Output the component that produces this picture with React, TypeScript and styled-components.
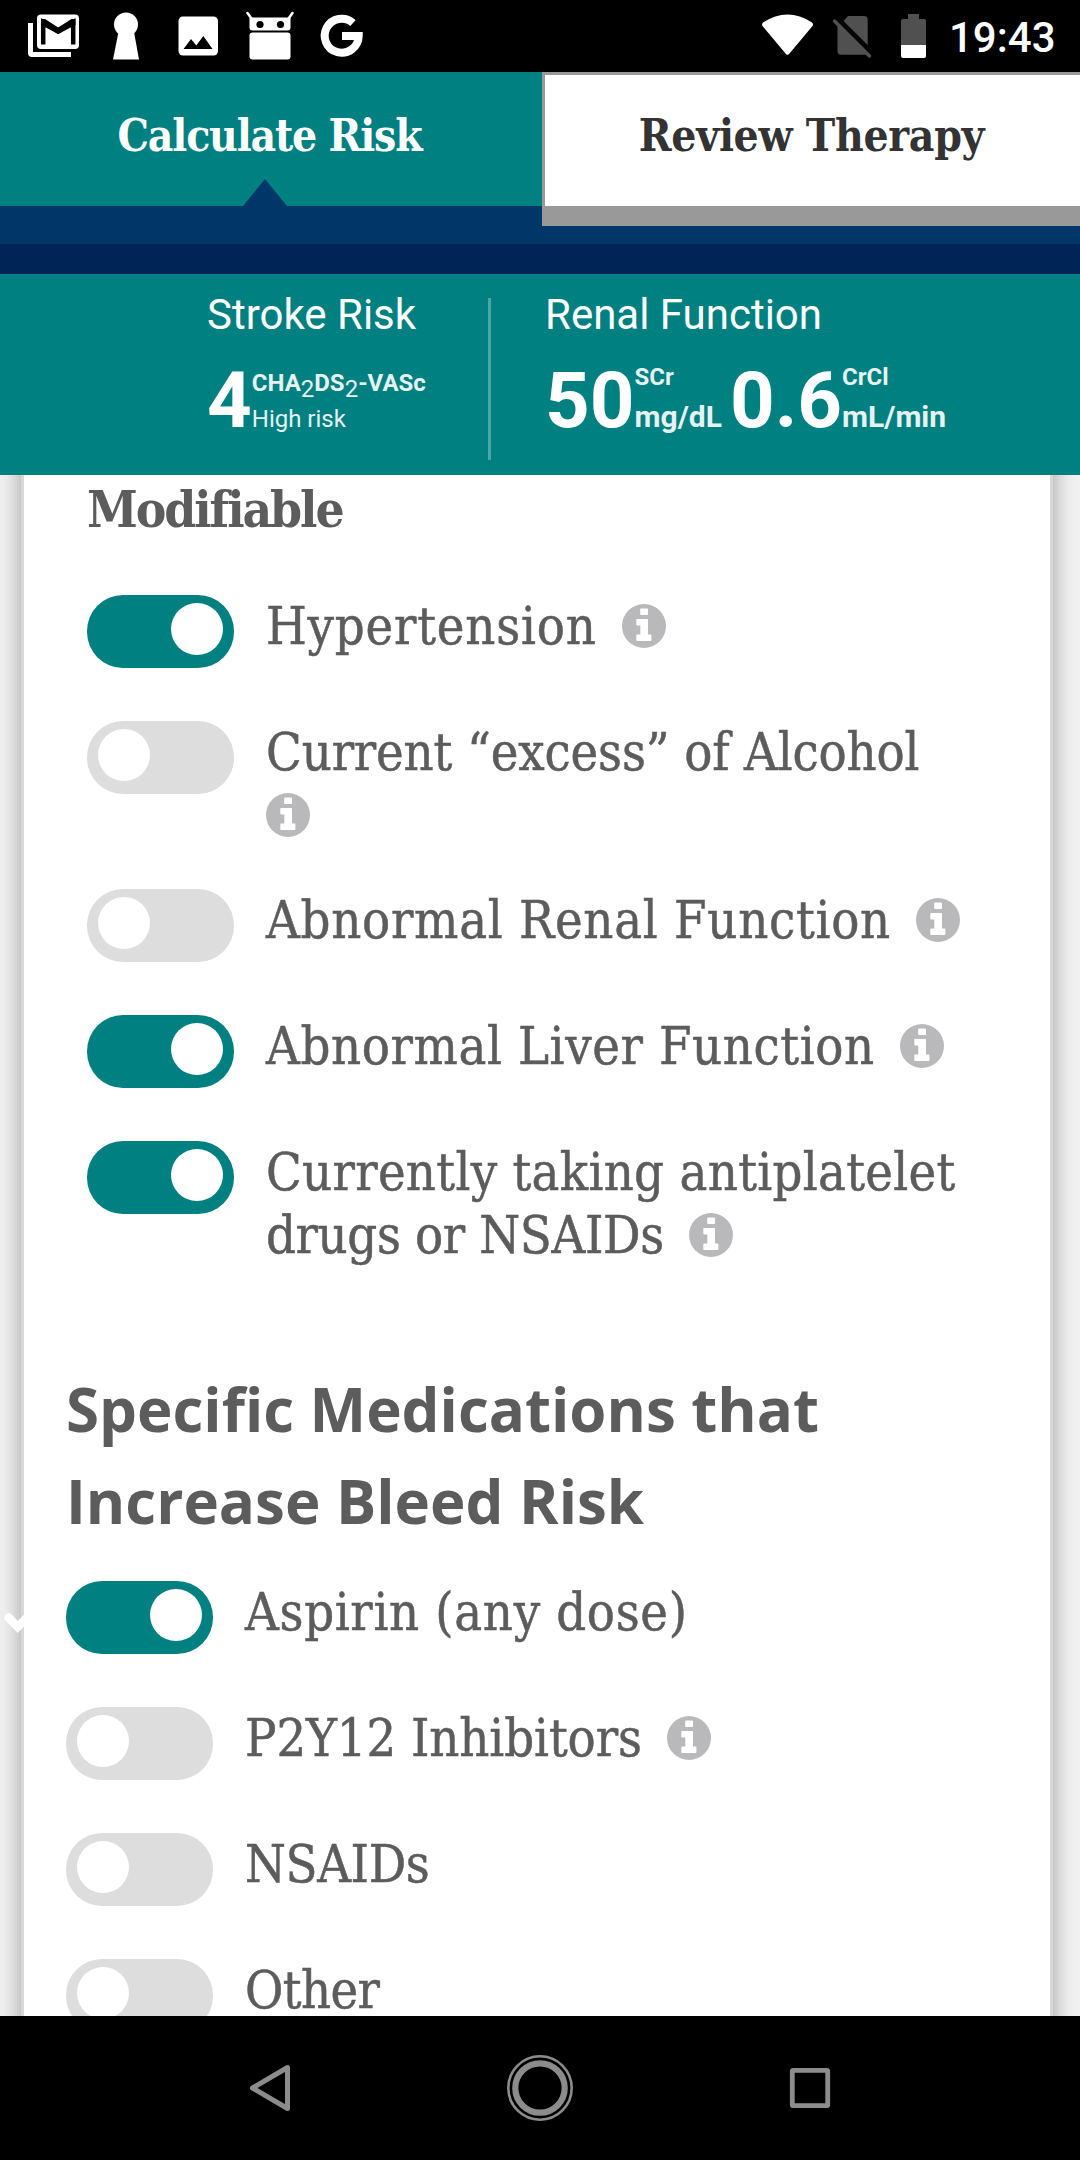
import React from 'react';
import styled, { createGlobalStyle } from 'styled-components';

const slab = `'Roboto Slab', 'DejaVu Serif Condensed', 'DejaVu Serif', serif`;
const teal = '#008080';

const GlobalStyle = createGlobalStyle`
  * { box-sizing: border-box; }
  body { margin: 0; background: #000; }
`;

const Screen = styled.div`
  display: flex;
  flex-direction: column;
  width: 1080px;
  height: 2160px;
  overflow: hidden;
  background: #f1f1f1;
  font-family: Roboto, sans-serif;
`;

const StatusBar = styled.header`
  display: flex;
  justify-content: space-between;
  flex: none;
  height: 72px;
  padding: 0 25px 0 18px;
  background: #000;
  color: #fff;
`;

const StatusGroup = styled.div`
  display: flex;
`;

const Glyph = styled.svg`
  display: block;
  flex: none;
`;

const Clock = styled.span`
  width: 106px;
  margin-left: 13px;
  font-size: 42px;
  font-weight: 500;
  line-height: 75px;
  white-space: nowrap;
`;

const Tabs = styled.nav`
  display: flex;
  flex: none;
  height: 172px;
  background: #003768;
`;

const Tab = styled.div<{ $active?: boolean }>`
  position: relative;
  width: ${(p) => (p.$active ? 542 : 538)}px;
  height: ${(p) => (p.$active ? 134 : 154)}px;
  padding-top: ${(p) => (p.$active ? 34 : 31)}px;
  padding-right: ${(p) => (p.$active ? 3 : 2)}px;
  background: ${(p) => (p.$active ? teal : '#fff')};
  color: ${(p) => (p.$active ? '#fff' : '#333')};
  border: 0 solid #999;
  border-width: ${(p) => (p.$active ? '0' : '3px 0 20px 3px')};
  font: 700 44px/60px ${slab};
  letter-spacing: ${(p) => (p.$active ? -1.2 : -0.3)}px;
  text-align: center;
  white-space: nowrap;
`;

const TabPointer = styled.span`
  position: absolute;
  left: 243px;
  bottom: 0;
  border: solid transparent;
  border-width: 0 22px 27px;
  border-bottom-color: #003768;
`;

const Band = styled.div`
  flex: none;
  height: 30px;
  background: #002456;
`;

const Summary = styled.section`
  display: flex;
  flex: none;
  height: 201px;
  padding: 24px 0 15px 207px;
  background: ${teal};
  color: #fff;
`;

const Stat = styled.div<{ $width?: number }>`
  width: ${(p) => (p.$width ? `${p.$width}px` : 'auto')};
`;

const StatTitle = styled.h2`
  margin: -8px 0 0;
  font-size: 42px;
  font-weight: 400;
  line-height: 50px;
`;

const StatDivider = styled.div`
  width: 3px;
  margin-right: 54px;
  background: rgba(255, 255, 255, 0.3);
`;

const Readings = styled.div`
  display: flex;
  gap: 8px;
  padding-top: 13px;
`;

const Reading = styled.div`
  display: flex;
`;

const Value = styled.strong`
  font-size: 78px;
  line-height: 95px;
  font-weight: 700;
`;

const Captions = styled.div`
  display: flex;
  flex-direction: column;
  opacity: 0.9;
`;

const Caption = styled.span<{ $top: number; $size?: number; $light?: boolean }>`
  margin-top: ${(p) => p.$top}px;
  font-size: ${(p) => p.$size ?? 24}px;
  font-weight: ${(p) => (p.$light ? 400 : 700)};
  line-height: 30px;
  white-space: nowrap;

  sub {
    position: relative;
    top: 6px;
    font-size: 24px;
    font-weight: 400;
    line-height: 0;
    vertical-align: baseline;
  }
`;

const Page = styled.main`
  position: relative;
  flex: 1;
  min-height: 0;
  overflow: hidden;
  padding: 0 27px 0 21px;
  background: #f1f1f1;
`;

const Card = styled.div`
  height: 1600px;
  margin-top: -20px;
  padding: 20px 42px 0;
  border: solid #d8d8d8;
  border-width: 0 3px;
  background: #fff;
  box-shadow: 0 0 21px rgba(0, 0, 0, 0.35);
  color: #5c5c5c;
`;

const Factors = styled.div<{ $indent?: boolean }>`
  padding-left: ${(p) => (p.$indent ? 21 : 0)}px;
`;

const GroupTitle = styled.h3`
  margin: 0;
  height: 120px;
  font: 700 51px/69px ${slab};
  letter-spacing: -2.1px;
`;

const SectionTitle = styled.h2`
  margin: 96px 0 0;
  height: 218px;
  font: 700 60px/92px 'Open Sans', 'Noto Sans', sans-serif;
`;

const Row = styled.div`
  display: flex;
  min-height: 84px;
  margin-bottom: 42px;
`;

const Track = styled.span<{ $on?: boolean }>`
  display: flex;
  flex: none;
  justify-content: ${(p) => (p.$on ? 'flex-end' : 'flex-start')};
  width: 147px;
  height: 73px;
  margin-right: 32px;
  padding: 8px 11px;
  border-radius: 36px;
  background: ${(p) => (p.$on ? teal : '#ddd')};
`;

const Knob = styled.span`
  width: 52px;
  height: 52px;
  border-radius: 50%;
  background: #fff;
`;

const Label = styled.div`
  font: 400 52px/63px ${slab};
  -webkit-text-stroke: 0.5px #5c5c5c;
`;

const Line = styled.div`
  display: flex;
  align-items: center;
  height: 63px;
  white-space: nowrap;
`;

const Words = styled.span<{ $spacing: number }>`
  letter-spacing: ${(p) => p.$spacing}px;
`;

const InfoIcon = styled.svg<{ $alone?: boolean }>`
  display: block;
  flex: none;
  width: 44px;
  height: 44px;
  margin-bottom: 2px;
  margin-left: ${(p) => (p.$alone ? 0 : 25)}px;
`;

const StrayCheck = styled.svg`
  position: absolute;
  left: 0;
  top: 1134px;
  display: block;
`;

const NavBar = styled.footer`
  display: flex;
  align-items: center;
  justify-content: center;
  gap: 198px;
  flex: none;
  height: 144px;
  background: #000;
`;

type TextLine = { text?: string; spacing?: number; info?: boolean };
type Factor = { on?: boolean; lines: TextLine[] };

const modifiable: Factor[] = [
  { on: true, lines: [{ text: 'Hypertension', spacing: 0.8, info: true }] },
  { lines: [{ text: 'Current “excess” of Alcohol', spacing: -0.15 }, { info: true }] },
  { lines: [{ text: 'Abnormal Renal Function', spacing: 0.73, info: true }] },
  { on: true, lines: [{ text: 'Abnormal Liver Function', spacing: 0.61, info: true }] },
  {
    on: true,
    lines: [
      { text: 'Currently taking antiplatelet', spacing: 0.3 },
      { text: 'drugs or NSAIDs', spacing: -0.37, info: true },
    ],
  },
];

const medications: Factor[] = [
  { on: true, lines: [{ text: 'Aspirin (any dose)', spacing: 0.67 }] },
  { lines: [{ text: 'P2Y12 Inhibitors', spacing: -0.1, info: true }] },
  { lines: [{ text: 'NSAIDs', spacing: -0.4 }] },
  { lines: [{ text: 'Other', spacing: -0.6 }] },
];

function Info({ alone }: { alone?: boolean }) {
  return (
    <InfoIcon viewBox="0 0 44 44" $alone={alone}>
      <circle cx="22" cy="22" r="22" fill="#b9b9bb" />
      <path
        fill="#fff"
        d="M19 4.5h6.2q.8 0 .8.8v5q0 .8-.8.8H19q-.8 0-.8-.8v-5q0-.8.8-.8zM15.1 15h10.1q.8 0 .8.8v14.6h2.6q.8 0 .8.8v5q0 .8-.8.8H15.1q-.8 0-.8-.8v-5q0-.8.8-.8h3.2v-9h-3.2q-.8 0-.8-.8v-4.8q0-.8.8-.8z"
      />
    </InfoIcon>
  );
}

function FactorRow({ on, lines }: Factor) {
  return (
    <Row>
      <Track $on={on}>
        <Knob />
      </Track>
      <Label>
        {lines.map((line, i) => (
          <Line key={i}>
            {line.text && <Words $spacing={line.spacing ?? 0}>{line.text}</Words>}
            {line.info && <Info alone={!line.text} />}
          </Line>
        ))}
      </Label>
    </Row>
  );
}

export default function App() {
  return (
    <Screen>
      <GlobalStyle />
      <StatusBar>
        <StatusGroup>
          <Glyph width="72" height="72" viewBox="18 0 72 72">
            <path d="M28 23h5v29h38v5H32q-4 0-4-4z" fill="#fff" />
            <rect x="37" y="14.500" width="42" height="34.500" rx="4" fill="#fff" />
            <path d="M43.200 44.500V22L58.200 31.500L73.200 22V44.500" fill="none" stroke="#000" strokeWidth="4.500" />
            <path d="M41 19h4l13.200 8.500L71.500 19h4v6L58.200 34L41 25z" fill="#000" />
          </Glyph>
          <Glyph width="72" height="72" viewBox="90 0 72 72">
            <circle cx="126" cy="24.500" r="12" fill="#fff" />
            <path d="M118.500 32h15.500L139 59.500H113z" fill="#fff" />
          </Glyph>
          <Glyph width="72" height="72" viewBox="162 0 72 72">
            <rect x="178.500" y="16.500" width="39.500" height="39" rx="4.500" fill="#fff" />
            <path d="M183.500 49l7.500-10l5.300 6.500l7-9.500l9.200 13z" fill="#000" />
          </Glyph>
          <Glyph width="72" height="72" viewBox="234 0 72 72">
            <path
              d="M247.500 13l5 7M292.500 13l-5 7"
              stroke="#fff"
              strokeWidth="2.500"
              strokeLinecap="round"
            />
            <path d="M249.500 17.500h41v10q0 3-3 3h-35q-3 0-3-3z" fill="#fff" />
            <rect x="249.500" y="32.500" width="41" height="27" rx="3" fill="#fff" />
            <circle cx="260" cy="24.500" r="3.600" />
            <circle cx="280.500" cy="24.500" r="3.600" />
          </Glyph>
          <Glyph width="72" height="72" viewBox="306 0 72 72">
            <path
              d="M353 23A17 17 0 1 0 358.700 36H342"
              fill="none"
              stroke="#fff"
              strokeWidth="8"
            />
          </Glyph>
        </StatusGroup>
        <StatusGroup>
          <Glyph width="64" height="72" viewBox="756 0 64 72">
            <path
              d="M763 22.500Q787.500 6.500 812 22.500Q813.700 24 812.500 26L789.500 53.500Q787.500 56 785.500 53.500L762.500 26Q761.300 24 763 22.500z"
              fill="#fff"
            />
          </Glyph>
          <Glyph width="60" height="72" viewBox="820 0 60 72">
            <path d="M848 16h16q3.700 0 3.700 3.700V45L843.500 21zM837.500 24L867 54q-1 .8-3 .8H841q-3.500 0-3.500-3.500z" fill="#505050" />
            <path d="M834.500 21L869.500 56" stroke="#505050" strokeWidth="3.500" strokeLinecap="round" />
          </Glyph>
          <Glyph width="56" height="72" viewBox="880 0 56 72">
            <path d="M908 14h11v5h5q2 0 2 2v24h-25V21q0-2 2-2h5z" fill="#505050" />
            <path d="M901 45h25v11q0 2-2 2h-21q-2 0-2-2z" fill="#fff" />
          </Glyph>
          <Clock>19:43</Clock>
        </StatusGroup>
      </StatusBar>

      <Tabs>
        <Tab $active>
          Calculate Risk
          <TabPointer />
        </Tab>
        <Tab>Review Therapy</Tab>
      </Tabs>
      <Band />

      <Summary>
        <Stat $width={281}>
          <StatTitle>Stroke Risk</StatTitle>
          <Readings>
            <Reading>
              <Value>4</Value>
              <Captions>
                <Caption $top={15}>
                  CHA<sub>2</sub>DS<sub>2</sub>-VASc
                </Caption>
                <Caption $top={6} $light>
                  High risk
                </Caption>
              </Captions>
            </Reading>
          </Readings>
        </Stat>
        <StatDivider />
        <Stat>
          <StatTitle>Renal Function</StatTitle>
          <Readings>
            <Reading>
              <Value>50</Value>
              <Captions>
                <Caption $top={9}>SCr</Caption>
                <Caption $top={10} $size={30}>
                  mg/dL
                </Caption>
              </Captions>
            </Reading>
            <Reading>
              <Value>0.6</Value>
              <Captions>
                <Caption $top={9}>CrCl</Caption>
                <Caption $top={10} $size={30}>
                  mL/min
                </Caption>
              </Captions>
            </Reading>
          </Readings>
        </Stat>
      </Summary>

      <Page>
        <Card>
          <Factors $indent>
            <GroupTitle>Modifiable</GroupTitle>
            {modifiable.map((f, i) => (
              <FactorRow key={i} {...f} />
            ))}
          </Factors>
          <SectionTitle>
            Specific Medications that
            <br />
            Increase Bleed Risk
          </SectionTitle>
          <Factors>
            {medications.map((f, i) => (
              <FactorRow key={i} {...f} />
            ))}
          </Factors>
        </Card>
        <StrayCheck width="24" height="30" viewBox="0 0 24 30">
          <path d="M8.500 8.500l9.200 9.500l20-20" fill="none" stroke="#fff" strokeWidth="8.500" strokeLinecap="round" />
        </StrayCheck>
      </Page>

      <NavBar>
        <Glyph width="72" height="72" viewBox="234 2052 72 72">
          <path d="M252.500 2088L287.500 2067.500V2108.500z" fill="none" stroke="#8c8c8c" strokeWidth="5" strokeLinejoin="round" />
        </Glyph>
        <Glyph width="72" height="72" viewBox="504 2052 72 72" fill="none">
          <circle cx="540" cy="2088" r="31.700" stroke="#8c8c8c" strokeWidth="2.600" />
          <circle cx="540" cy="2088" r="24.700" stroke="#8c8c8c" strokeWidth="6.200" />
        </Glyph>
        <Glyph width="72" height="72" viewBox="774 2052 72 72">
          <rect x="792.300" y="2070.300" width="35.400" height="35.400" rx="1" fill="none" stroke="#8c8c8c" strokeWidth="4.800" />
        </Glyph>
      </NavBar>
    </Screen>
  );
}
